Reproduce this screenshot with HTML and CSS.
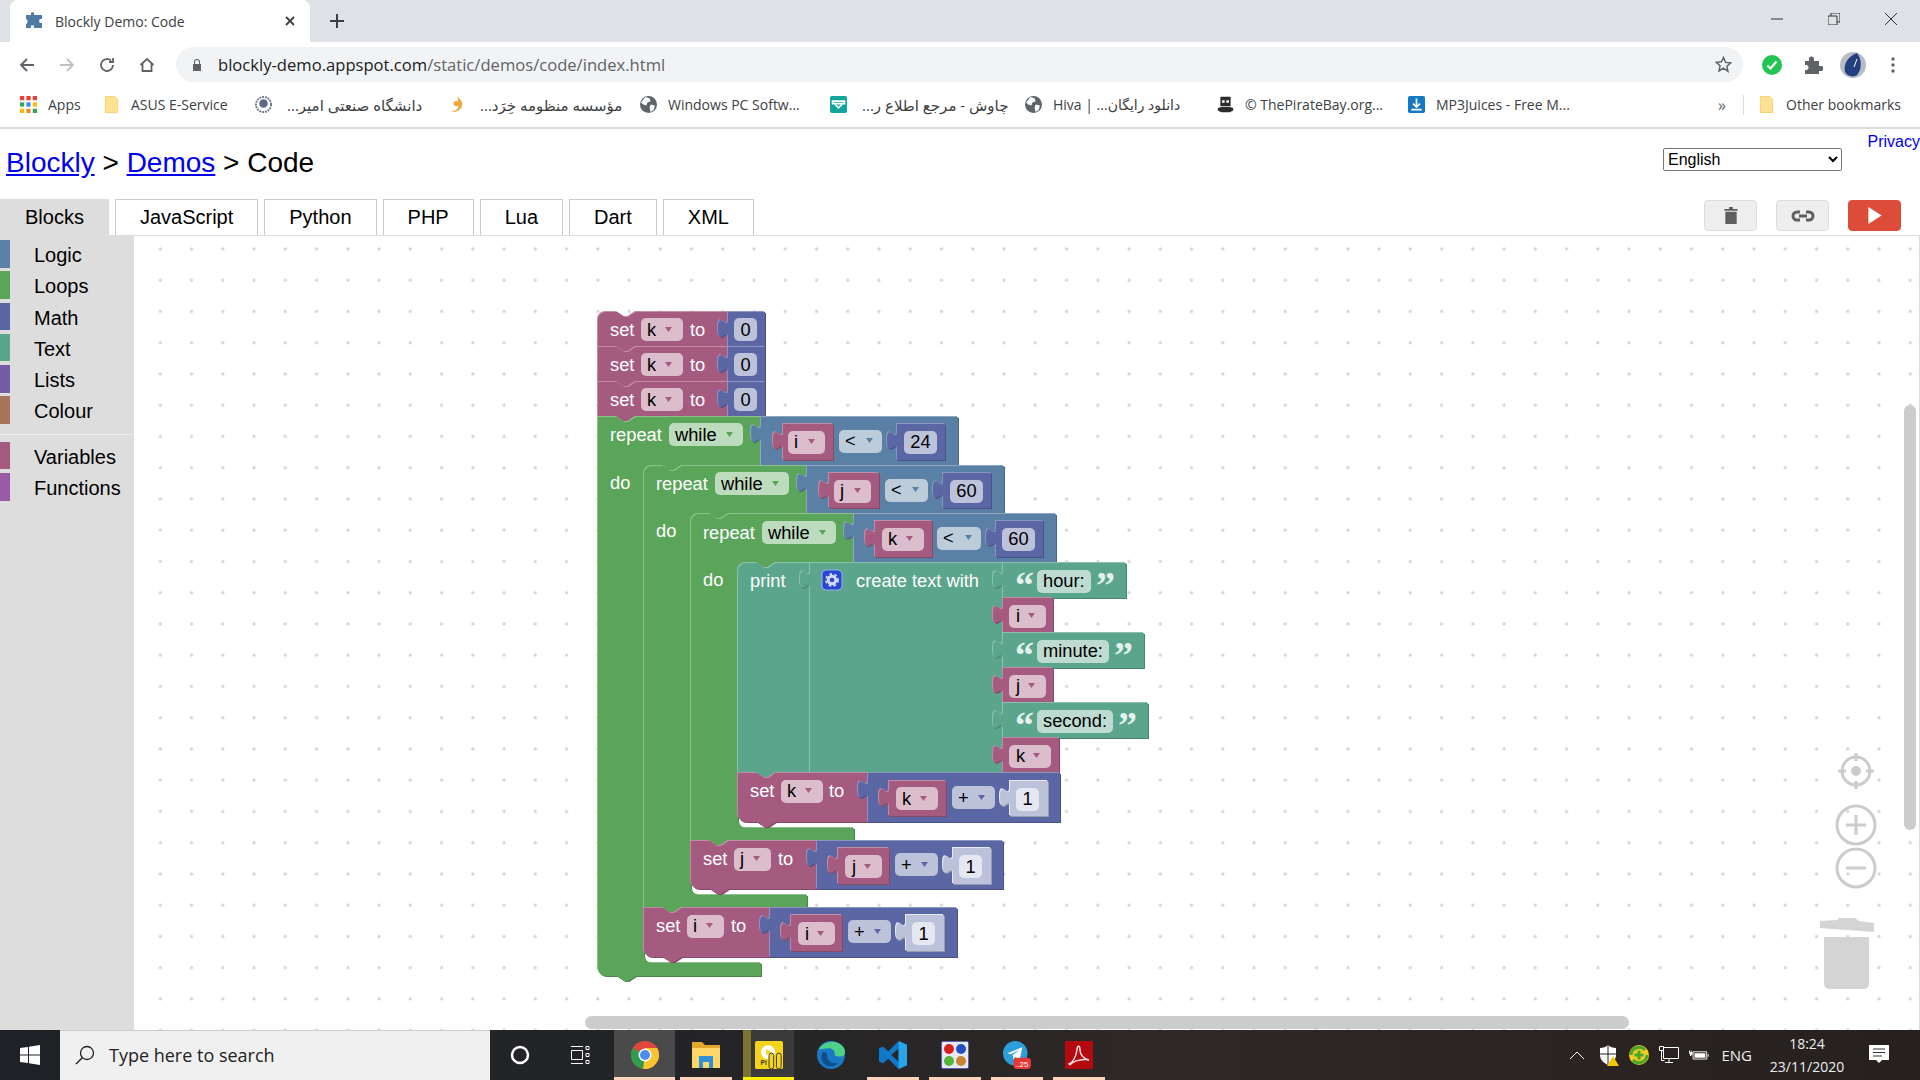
FILE: index.html
```html
<!DOCTYPE html>
<html lang="en">
<head>
  <meta charset="UTF-8">
  <title>Blockly Demo: Code</title>
  <link rel="stylesheet" href="styles.css">
</head>
<body>
  <!-- Browser chrome -->
  <div class="tabstrip">
    <div class="tab">
      <svg class="favicon" viewBox="0 0 20 18"><path fill="#4f7aa3" d="M0 3h5V1c0-1 3-1 3 0v2h8v4h-2c-1 0-1 4 0 4h2v5H8v-2c0-1-3-1-3 0v2H0v-4c2 0 2-5 0-5z"/></svg>
      <span class="tab-title">Blockly Demo: Code</span>
      <svg class="tab-x" viewBox="0 0 10 10"><path d="M1 1l8 8M9 1l-8 8"/></svg>
    </div>
    <svg class="tab-new" viewBox="0 0 14 14"><path d="M7 0v14M0 7h14"/></svg>
    <div class="win-btns">
      <svg viewBox="0 0 12 12"><path d="M0 6h12"/></svg>
      <svg viewBox="0 0 12 12"><path d="M0 3h9v9H0zM3 3V0h9v9H9"/></svg>
      <svg viewBox="0 0 12 12"><path d="M0 0l12 12M12 0L0 12"/></svg>
    </div>
  </div>

  <div class="toolbar">
    <svg class="tool" viewBox="0 0 16 16"><path d="M15 8H2M8 2L2 8l6 6"/></svg>
    <svg class="tool off" viewBox="0 0 16 16"><path d="M1 8h13M8 2l6 6-6 6"/></svg>
    <svg class="tool" viewBox="0 0 16 16"><path d="M14 8a6 6 0 1 1-2-4.500M14 1v4h-4"/></svg>
    <svg class="tool" viewBox="0 0 16 16"><path d="M1.500 8L8 2l6.500 6M3.500 7v7h9V7"/></svg>
    <div class="omnibox">
      <svg class="lock" viewBox="0 0 10 12"><path fill="#5f6368" d="M1 5h1V3a3 3 0 0 1 6 0v2h1v7H1zm2 0h4V3a2 2 0 0 0-4 0z"/></svg>
      <span class="url">blockly-demo.appspot.com<span class="url-path">/static/demos/code/index.html</span></span>
      <svg class="star" viewBox="0 0 16 16"><path d="M8 1.500l2 4.500 4.800.5-3.600 3.200 1 4.800L8 11.500 3.800 14l1-4.800L1.200 6 6 5.500z"/></svg>
    </div>
    <div class="ext-icons">
      <svg viewBox="0 0 20 20"><circle cx="10" cy="10" r="10" fill="#23c552"/><path d="M5.500 10.500l3 3 6-7" fill="none" stroke="#fff" stroke-width="2.200"/></svg>
      <svg viewBox="0 0 20 20"><path fill="#5f6368" d="M2 6h4V4a2.500 2.500 0 0 1 5 0v2h5v5h2a2.500 2.500 0 0 1 0 5h-2v3H2v-4h1a2.500 2.500 0 0 0 0-5H2z"/></svg>
      <svg viewBox="0 0 26 26"><circle cx="13" cy="13" r="13" fill="#b9bcc4"/><path fill="#23407e" d="M17 1C9 4 3 11 5 20c2 4 8 6 12 3 5-5 5-16 0-22z"/><path stroke="#fff" d="M17 7l-3 8"/></svg>
      <svg viewBox="0 0 4 16"><circle cx="2" cy="2" r="1.700" fill="#5f6368"/><circle cx="2" cy="8" r="1.700" fill="#5f6368"/><circle cx="2" cy="14" r="1.700" fill="#5f6368"/></svg>
    </div>
  </div>

  <div class="bookmarks">
    <div class="bm">
      <svg class="bm-ico" viewBox="0 0 16 16"><path fill="#ea4335" d="M0 0h4v4H0zM6 0h4v4H6zM12 0h4v4h-4z"/><path fill="#34a853" d="M0 6h4v4H0z"/><path fill="#4285f4" d="M6 6h4v4H6z"/><path fill="#fbbc05" d="M12 6h4v4h-4z"/><path fill="#fbbc05" d="M0 12h4v4H0z"/><path fill="#ea8a35" d="M6 12h4v4H6z"/><path fill="#34a853" d="M12 12h4v4h-4z"/></svg>
      <span>Apps</span>
    </div>
    <div class="bm">
      <svg class="bm-ico" viewBox="0 0 16 18"><path fill="#fde293" stroke="#f3d36e" d="M1.500.500h10l3 3v14h-13z"/></svg>
      <span>ASUS E-Service</span>
    </div>
    <div class="bm">
      <svg class="bm-ico" viewBox="0 0 18 18"><circle cx="9" cy="9" r="8" fill="#fff" stroke="#66718a" stroke-width="2" stroke-dasharray="2 1"/><circle cx="9" cy="8" r="4.500" fill="#5c6a8a"/></svg>
      <span class="fa" dir="rtl">دانشگاه صنعتی امیر...</span>
    </div>
    <div class="bm">
      <svg class="bm-ico" viewBox="0 0 16 18"><path fill="#f0a63c" d="M9 0c1 3 6 4 5 10-1 5-7 8-12 6 5 0 8-2 8-6-3 2-6 0-5-3 1-2 4-2 5-1 0-2-1-4-1-6z"/></svg>
      <span class="fa" dir="rtl">مؤسسه منظومه خِرَد...</span>
    </div>
    <div class="bm">
      <svg class="bm-ico" viewBox="0 0 16 16"><circle cx="8" cy="8" r="8" fill="#5f6368"/><path fill="#fff" d="M5 1l4 1 1 3-3 1-1 3-3-1-2-2zM10 8l4 1-1 4-3 2-1-4z"/></svg>
      <span>Windows PC Softw...</span>
    </div>
    <div class="bm">
      <svg class="bm-ico" viewBox="0 0 20 20"><rect width="20" height="20" rx="2" fill="#12a59b"/><path fill="none" stroke="#fff" stroke-width="2" d="M3 6h14v3H3zM6 10l4 4 4-4"/></svg>
      <span class="fa" dir="rtl">چاوش - مرجع اطلاع ر...</span>
    </div>
    <div class="bm">
      <svg class="bm-ico" viewBox="0 0 16 16"><circle cx="8" cy="8" r="8" fill="#5f6368"/><path fill="#fff" d="M5 1l4 1 1 3-3 1-1 3-3-1-2-2zM10 8l4 1-1 4-3 2-1-4z"/></svg>
      <span dir="rtl">دانلود رایگان... | Hiva</span>
    </div>
    <div class="bm">
      <svg class="bm-ico" viewBox="0 0 20 20"><path fill="#2b2b2b" d="M4 1h12v11H4zM1 14l4-1h10l4 1v3l-4 2H5l-4-2z"/><path fill="#fff" d="M6 5h3v3H6zM11 5h3v3h-3z"/></svg>
      <span>© ThePirateBay.org...</span>
    </div>
    <div class="bm">
      <svg class="bm-ico" viewBox="0 0 20 20"><rect width="20" height="20" rx="2" fill="#1578c2"/><path fill="none" stroke="#fff" stroke-width="2" d="M10 3v9M6 9l4 4 4-4M4 16h12"/></svg>
      <span>MP3Juices - Free M...</span>
    </div>
    <span class="bm-more">»</span>
    <span class="bm-sep"></span>
    <div class="bm">
      <svg class="bm-ico" viewBox="0 0 16 18"><path fill="#fde293" stroke="#f3d36e" d="M1.500.500h10l3 3v14h-13z"/></svg>
      <span>Other bookmarks</span>
    </div>
  </div>

  <!-- Page -->
  <main class="page">
    <header class="page-head">
      <h1><a href="#">Blockly</a> &gt; <a href="#">Demos</a> &gt; Code</h1>
      <div class="page-opts">
        <a class="privacy" href="#">Privacy</a>
        <select class="lang"><option>English</option></select>
      </div>
    </header>

    <div class="tabrow">
      <div class="code-tab active">Blocks</div>
      <div class="code-tab">JavaScript</div>
      <div class="code-tab">Python</div>
      <div class="code-tab">PHP</div>
      <div class="code-tab">Lua</div>
      <div class="code-tab">Dart</div>
      <div class="code-tab">XML</div>
      <div class="actions">
        <button class="act">
          <svg viewBox="0 0 14 18"><path fill="#5f5f5f" d="M5 0h4v2h5v2H0V2h5zM1 5h12v13H1z"/></svg>
        </button>
        <button class="act">
          <svg viewBox="0 0 24 12"><path fill="none" stroke="#5f5f5f" stroke-width="3" d="M9 2H6a4 4 0 0 0 0 8h3M15 2h3a4 4 0 0 1 0 8h-3M8 6h8"/></svg>
        </button>
        <button class="act run">
          <svg viewBox="0 0 14 18"><path fill="#fff" d="M0 0l14 9-14 9z"/></svg>
        </button>
      </div>
    </div>

    <div class="editor">
      <aside class="toolbox">
        <div class="cat c-logic">Logic</div>
        <div class="cat c-loops">Loops</div>
        <div class="cat c-math">Math</div>
        <div class="cat c-text">Text</div>
        <div class="cat c-lists">Lists</div>
        <div class="cat c-colour">Colour</div>
        <div class="cat-sep"></div>
        <div class="cat c-vars">Variables</div>
        <div class="cat c-funcs">Functions</div>
      </aside>

      <div class="workspace">
        <svg class="canvas" viewBox="134 236 1786 794">
          <defs>
            <pattern id="grid" patternUnits="userSpaceOnUse" x="144.700" y="233.400" width="31.250" height="31.250">
              <circle cx="15.600" cy="15.600" r="1.600" fill="#d2d2d2"/>
            </pattern>
          </defs>
          <rect x="134" y="236" width="1786" height="794" fill="url(#grid)"/>

          <!-- three set k blocks -->
          <g transform="translate(598 312)">
            <path class="pk" d="M0 8a8 8 0 0 1 8-8H19l7.500 5 3.750 0 7.500-5H130V35H37.750l-7.500 5-3.750 0-7.500-5H0Z"/>
            <text class="w" x="12" y="24">set</text>
            <rect class="fpk" x="43" y="6" width="42" height="23" rx="5"/><text class="d" x="49" y="24">k</text><path class="apk" d="M67 15h7l-3.500 5z"/>
            <text class="w" x="92" y="24">to</text>
            <path class="ma" d="M130 0h37V35H130V26c0-12.500-10 10-10-9.400s10 3.100 10-9.400Z"/>
            <rect class="fma" x="136" y="6" width="23" height="23" rx="5"/><text class="d" x="147.500" y="24" text-anchor="middle">0</text>
          </g>
          <g transform="translate(598 347)">
            <path class="pk" d="M0 0H19l7.500 5 3.750 0 7.500-5H130V35H37.750l-7.500 5-3.750 0-7.500-5H0Z"/>
            <text class="w" x="12" y="24">set</text>
            <rect class="fpk" x="43" y="6" width="42" height="23" rx="5"/><text class="d" x="49" y="24">k</text><path class="apk" d="M67 15h7l-3.500 5z"/>
            <text class="w" x="92" y="24">to</text>
            <path class="ma" d="M130 0h37V35H130V26c0-12.500-10 10-10-9.400s10 3.100 10-9.400Z"/>
            <rect class="fma" x="136" y="6" width="23" height="23" rx="5"/><text class="d" x="147.500" y="24" text-anchor="middle">0</text>
          </g>
          <g transform="translate(598 382)">
            <path class="pk" d="M0 0H19l7.500 5 3.750 0 7.500-5H130V35H37.750l-7.500 5-3.750 0-7.500-5H0Z"/>
            <text class="w" x="12" y="24">set</text>
            <rect class="fpk" x="43" y="6" width="42" height="23" rx="5"/><text class="d" x="49" y="24">k</text><path class="apk" d="M67 15h7l-3.500 5z"/>
            <text class="w" x="92" y="24">to</text>
            <path class="ma" d="M130 0h37V35H130V26c0-12.500-10 10-10-9.400s10 3.100 10-9.400Z"/>
            <rect class="fma" x="136" y="6" width="23" height="23" rx="5"/><text class="d" x="147.500" y="24" text-anchor="middle">0</text>
          </g>

          <!-- outer repeat -->
          <g transform="translate(598 417)">
            <path class="gr" d="M0 0H19l7.500 5 3.750 0 7.500-5H163V49H84l-7.500 5-3.750 0-7.500-5H54a8 8 0 0 0-8 8V538a8 8 0 0 0 8 8H163V559H37.750l-7.500 5-3.750 0-7.500-5H8a8 8 0 0 1-8-8Z"/>
            <text class="w" x="12" y="24">repeat</text>
            <rect class="fgr" x="71" y="6" width="74" height="23" rx="5"/><text class="d" x="77" y="24">while</text><path class="agr" d="M128 15h7l-3.500 5z"/>
            <text class="w" x="12" y="72">do</text>
          </g>
          <g transform="translate(761 417)">
            <path class="bl" d="M0 0H197V49H0V26c0-12.500-10 10-10-9.400s10 3.100 10-9.400Z"/>
            <path class="pk" transform="translate(22 7)" d="M0 0H50V36H0V26c0-12.500-10 10-10-9.400s10 3.100 10-9.400Z"/>
            <rect class="fpk" x="27" y="14" width="37" height="23" rx="5"/><text class="d" x="33" y="31">i</text><path class="apk" d="M47 22h7l-3.500 5z"/>
            <rect class="fbl" x="78" y="13" width="43" height="23" rx="5"/><text class="d" x="84" y="30">&lt;</text><path class="abl" d="M105 21h7l-3.500 5z"/>
            <path class="ma" transform="translate(136 7)" d="M0 0H48V36H0V26c0-12.500-10 10-10-9.400s10 3.100 10-9.400Z"/>
            <rect class="fma" x="143" y="14" width="33" height="23" rx="5"/><text class="d" x="159.500" y="31" text-anchor="middle">24</text>
          </g>

          <!-- middle repeat -->
          <g transform="translate(644 466)">
            <path class="gr" d="M8 0H19l7.500 5 3.750 0 7.500-5H163V48H85l-7.500 5-3.750 0-7.500-5H55a8 8 0 0 0-8 8V421a8 8 0 0 0 8 8H163V442H37.750l-7.500 5-3.750 0-7.500-5H0V8a8 8 0 0 1 8-8Z"/>
            <text class="w" x="12" y="24">repeat</text>
            <rect class="fgr" x="71" y="6" width="74" height="23" rx="5"/><text class="d" x="77" y="24">while</text><path class="agr" d="M128 15h7l-3.500 5z"/>
            <text class="w" x="12" y="71">do</text>
          </g>
          <g transform="translate(807 466)">
            <path class="bl" d="M0 0H197V48H0V26c0-12.500-10 10-10-9.400s10 3.100 10-9.400Z"/>
            <path class="pk" transform="translate(22 7)" d="M0 0H50V35H0V26c0-12.500-10 10-10-9.400s10 3.100 10-9.400Z"/>
            <rect class="fpk" x="27" y="14" width="37" height="23" rx="5"/><text class="d" x="33" y="31">j</text><path class="apk" d="M47 22h7l-3.500 5z"/>
            <rect class="fbl" x="78" y="13" width="43" height="23" rx="5"/><text class="d" x="84" y="30">&lt;</text><path class="abl" d="M105 21h7l-3.500 5z"/>
            <path class="ma" transform="translate(136 7)" d="M0 0H48V35H0V26c0-12.500-10 10-10-9.400s10 3.100 10-9.400Z"/>
            <rect class="fma" x="143" y="14" width="33" height="23" rx="5"/><text class="d" x="159.500" y="31" text-anchor="middle">60</text>
          </g>

          <!-- inner repeat -->
          <g transform="translate(691 514)">
            <path class="gr" d="M8 0H19l7.500 5 3.750 0 7.500-5H163V49H85l-7.500 5-3.750 0-7.500-5H55a8 8 0 0 0-8 8V306a8 8 0 0 0 8 8H163V327H37.750l-7.500 5-3.750 0-7.500-5H0V8a8 8 0 0 1 8-8Z"/>
            <text class="w" x="12" y="25">repeat</text>
            <rect class="fgr" x="71" y="7" width="74" height="23" rx="5"/><text class="d" x="77" y="25">while</text><path class="agr" d="M128 16h7l-3.500 5z"/>
            <text class="w" x="12" y="72">do</text>
          </g>
          <g transform="translate(854 514)">
            <path class="bl" d="M0 0H202V49H0V26c0-12.500-10 10-10-9.400s10 3.100 10-9.400Z"/>
            <path class="pk" transform="translate(21 7)" d="M0 0H57V36H0V26c0-12.500-10 10-10-9.400s10 3.100 10-9.400Z"/>
            <rect class="fpk" x="28" y="14" width="42" height="23" rx="5"/><text class="d" x="34" y="31">k</text><path class="apk" d="M52 22h7l-3.500 5z"/>
            <rect class="fbl" x="83" y="13" width="44" height="23" rx="5"/><text class="d" x="89" y="30">&lt;</text><path class="abl" d="M111 21h7l-3.500 5z"/>
            <path class="ma" transform="translate(142 7)" d="M0 0H47V36H0V26c0-12.500-10 10-10-9.400s10 3.100 10-9.400Z"/>
            <rect class="fma" x="148" y="14" width="33" height="23" rx="5"/><text class="d" x="164.500" y="31" text-anchor="middle">60</text>
          </g>

          <!-- print + create text with -->
          <g transform="translate(738 563)">
            <path class="tx" d="M8 0H19l7.500 5 3.750 0 7.500-5H72V210H37.750l-7.500 5-3.750 0-7.500-5H0V8a8 8 0 0 1 8-8Z"/>
            <text class="w" x="12" y="24">print</text>
            <path class="tx" d="M72 0H265V210H72V26c0-12.500-10 10-10-9.400s10 3.100 10-9.400Z"/>
            <rect x="84" y="7" width="20" height="20" rx="4" fill="#2646d4" stroke="#9fb0e6"/>
            <circle cx="94" cy="17" r="5.200" fill="#d3dcfb"/>
            <circle cx="94" cy="17" r="6" fill="none" stroke="#d3dcfb" stroke-width="1.800" stroke-dasharray="2.600 2.400"/>
            <circle cx="94" cy="17" r="2.300" fill="#2646d4"/>
            <text class="w" x="118" y="24">create text with</text>
          </g>
          <g transform="translate(1003 563)">
            <path class="tx" d="M0 0H123V35H0V26c0-12.500-10 10-10-9.400s10 3.100 10-9.400Z"/>
            <text class="q" x="12" y="35">“</text>
            <rect class="ftx" x="34" y="7" width="54" height="23" rx="5"/><text class="d" x="40" y="24">hour:</text>
            <text class="q" x="93" y="35">”</text>
          </g>
          <g transform="translate(1003 598)">
            <path class="pk" d="M0 0H50V35H0V26c0-12.500-10 10-10-9.400s10 3.100 10-9.400Z"/>
            <rect class="fpk" x="6" y="7" width="37" height="23" rx="5"/><text class="d" x="13" y="24">i</text><path class="apk" d="M25 15h7l-3.500 5z"/>
          </g>
          <g transform="translate(1003 633)">
            <path class="tx" d="M0 0H141V35H0V26c0-12.500-10 10-10-9.400s10 3.100 10-9.400Z"/>
            <text class="q" x="12" y="35">“</text>
            <rect class="ftx" x="34" y="7" width="72" height="23" rx="5"/><text class="d" x="40" y="24">minute:</text>
            <text class="q" x="111" y="35">”</text>
          </g>
          <g transform="translate(1003 668)">
            <path class="pk" d="M0 0H50V35H0V26c0-12.500-10 10-10-9.400s10 3.100 10-9.400Z"/>
            <rect class="fpk" x="6" y="7" width="37" height="23" rx="5"/><text class="d" x="13" y="24">j</text><path class="apk" d="M25 15h7l-3.500 5z"/>
          </g>
          <g transform="translate(1003 703)">
            <path class="tx" d="M0 0H145V35H0V26c0-12.500-10 10-10-9.400s10 3.100 10-9.400Z"/>
            <text class="q" x="12" y="35">“</text>
            <rect class="ftx" x="34" y="7" width="76" height="23" rx="5"/><text class="d" x="40" y="24">second:</text>
            <text class="q" x="115" y="35">”</text>
          </g>
          <g transform="translate(1003 738)">
            <path class="pk" d="M0 0H56V35H0V26c0-12.500-10 10-10-9.400s10 3.100 10-9.400Z"/>
            <rect class="fpk" x="6" y="7" width="42" height="23" rx="5"/><text class="d" x="13" y="24">k</text><path class="apk" d="M30 15h7l-3.500 5z"/>
          </g>

          <!-- set k = k + 1 -->
          <g transform="translate(738 773)">
            <path class="pk" d="M0 0H19l7.500 5 3.750 0 7.500-5H130V49H37.750l-7.500 5-3.750 0-7.500-5H8a8 8 0 0 1-8-8Z"/>
            <text class="w" x="12" y="24">set</text>
            <rect class="fpk" x="43" y="7" width="42" height="23" rx="5"/><text class="d" x="49" y="24">k</text><path class="apk" d="M67 15h7l-3.500 5z"/>
            <text class="w" x="91" y="24">to</text>
            <g transform="translate(130 0)">
              <path class="ma" d="M0 0H192V49H0V26c0-12.500-10 10-10-9.400s10 3.100 10-9.400Z"/>
              <path class="pk" transform="translate(21 8)" d="M0 0H57V35H0V26c0-12.500-10 10-10-9.400s10 3.100 10-9.400Z"/>
              <rect class="fpk" x="28" y="14" width="42" height="23" rx="5"/><text class="d" x="34" y="32">k</text><path class="apk" d="M52 23h7l-3.500 5z"/>
              <rect class="fma" x="84" y="13" width="43" height="23" rx="5"/><text class="d" x="90" y="31">+</text><path class="ama" d="M110 22h7l-3.500 5z"/>
              <path class="sh" transform="translate(142 8)" d="M0 0H38V35H0V26c0-12.500-10 10-10-9.400s10 3.100 10-9.400Z"/>
              <rect class="fsh" x="148" y="15" width="23" height="23" rx="5"/><text class="d" x="159.500" y="32" text-anchor="middle">1</text>
            </g>
          </g>

          <!-- set j = j + 1 -->
          <g transform="translate(691 841)">
            <path class="pk" d="M0 0H19l7.500 5 3.750 0 7.500-5H126V48H37.750l-7.500 5-3.750 0-7.500-5H8a8 8 0 0 1-8-8Z"/>
            <text class="w" x="12" y="24">set</text>
            <rect class="fpk" x="43" y="7" width="37" height="23" rx="5"/><text class="d" x="49" y="24">j</text><path class="apk" d="M62 15h7l-3.500 5z"/>
            <text class="w" x="87" y="24">to</text>
            <g transform="translate(126 0)">
              <path class="ma" d="M0 0H186V48H0V26c0-12.500-10 10-10-9.400s10 3.100 10-9.400Z"/>
              <path class="pk" transform="translate(21 7)" d="M0 0H51V36H0V26c0-12.500-10 10-10-9.400s10 3.100 10-9.400Z"/>
              <rect class="fpk" x="28" y="14" width="37" height="23" rx="5"/><text class="d" x="35" y="32">j</text><path class="apk" d="M47 23h7l-3.500 5z"/>
              <rect class="fma" x="78" y="12" width="43" height="23" rx="5"/><text class="d" x="84" y="30">+</text><path class="ama" d="M104 21h7l-3.500 5z"/>
              <path class="sh" transform="translate(136 7)" d="M0 0H38V36H0V26c0-12.500-10 10-10-9.400s10 3.100 10-9.400Z"/>
              <rect class="fsh" x="142" y="14" width="23" height="23" rx="5"/><text class="d" x="153.500" y="32" text-anchor="middle">1</text>
            </g>
          </g>

          <!-- set i = i + 1 -->
          <g transform="translate(644 908)">
            <path class="pk" d="M0 0H19l7.500 5 3.750 0 7.500-5H126V49H37.750l-7.500 5-3.750 0-7.500-5H8a8 8 0 0 1-8-8Z"/>
            <text class="w" x="12" y="24">set</text>
            <rect class="fpk" x="43" y="7" width="37" height="23" rx="5"/><text class="d" x="49" y="24">i</text><path class="apk" d="M62 15h7l-3.500 5z"/>
            <text class="w" x="87" y="24">to</text>
            <g transform="translate(126 0)">
              <path class="ma" d="M0 0H187V49H0V26c0-12.500-10 10-10-9.400s10 3.100 10-9.400Z"/>
              <path class="pk" transform="translate(21 7)" d="M0 0H51V36H0V26c0-12.500-10 10-10-9.400s10 3.100 10-9.400Z"/>
              <rect class="fpk" x="28" y="14" width="37" height="23" rx="5"/><text class="d" x="35" y="32">i</text><path class="apk" d="M47 23h7l-3.500 5z"/>
              <rect class="fma" x="78" y="12" width="43" height="23" rx="5"/><text class="d" x="84" y="30">+</text><path class="ama" d="M104 21h7l-3.500 5z"/>
              <path class="sh" transform="translate(136 7)" d="M0 0H38V36H0V26c0-12.500-10 10-10-9.400s10 3.100 10-9.400Z"/>
              <rect class="fsh" x="142" y="14" width="23" height="23" rx="5"/><text class="d" x="153.500" y="32" text-anchor="middle">1</text>
            </g>
          </g>

          <!-- workspace controls -->
          <g class="ctl">
            <circle cx="1856" cy="771" r="14" fill="#fff"/>
            <path d="M1856 753v8M1856 781v8M1838 771h8M1866 771h8"/>
            <circle cx="1856" cy="825" r="19" fill="none"/>
            <path d="M1856 815v20M1846 825h20"/>
            <circle cx="1856" cy="868" r="19" fill="none"/>
            <path d="M1846 868h20"/>
          </g>
          <circle cx="1856" cy="771" r="5" fill="#ccc"/>
          <path class="bin" d="M1820 921l17-1 2-2h16l4 3 15 2v9l-54-4z"/>
          <path class="bin" d="M1824 937h45v47a5 5 0 0 1-5 5h-35a5 5 0 0 1-5-5z"/>

          <rect class="bar" x="585" y="1016" width="1044" height="13" rx="6.500"/>
          <rect class="bar" x="1904" y="405" width="12" height="425" rx="6"/>
          <rect x="1919" y="236" width="1" height="794" fill="#ddd"/>
        </svg>
      </div>
    </div>
  </main>

  <!-- Windows taskbar -->
  <footer class="taskbar">
    <div class="start">
      <svg viewBox="0 0 20 20"><path fill="#fff" d="M0 3l8-1v7.500H0zM9 1.800L20 0v9.500H9zM0 10.500h8V18l-8-1zM9 10.500h11V20L9 18.200z"/></svg>
    </div>
    <div class="search">
      <svg viewBox="0 0 20 20"><circle cx="12" cy="8" r="6.500" fill="none" stroke="#222" stroke-width="1.300"/><path d="M7.500 12.500L1 19" stroke="#222" stroke-width="1.500"/></svg>
      <span>Type here to search</span>
    </div>
    <div class="task plain">
      <svg viewBox="0 0 20 20"><circle cx="10" cy="10" r="8" fill="none" stroke="#fff" stroke-width="2.500"/></svg>
    </div>
    <div class="task plain view">
      <svg viewBox="0 0 20 20"><path fill="none" stroke="#fff" d="M1 1.500h12M1 18.500h12M1.500 5.500h11v9h-11zM16 1.500h3v3h-3zM16 8.500h3v3h-3zM16 15.500h3v3h-3z"/></svg>
    </div>
    <div class="task on current">
      <svg viewBox="0 0 28 28"><circle cx="14" cy="14" r="14" fill="#e0483b"/><path fill="#2f9d4e" d="M14 14L1.900 7A14 14 0 0 0 12 27.900z"/><path fill="#f7c531" d="M14 14l0-7h12.100A14 14 0 0 1 12 27.900z"/><circle cx="14" cy="14" r="6.500" fill="#fff"/><circle cx="14" cy="14" r="5" fill="#4c8bf0"/></svg>
    </div>
    <div class="task on">
      <svg viewBox="0 0 28 26"><path fill="#e3a82b" d="M0 0h10l3 3h15v23H0z"/><path fill="#ffd768" d="M0 6h28v20H0z"/><path fill="#2f8fd8" d="M7 14h14v12h-4v-6h-6v6H7z"/></svg>
    </div>
    <div class="task hot">
      <svg viewBox="0 0 30 30"><rect width="30" height="30" rx="2" fill="#f6d41d"/><circle cx="14" cy="12" r="7.500" fill="#fff"/><path fill="#f6d41d" d="M12 8.500l6 3.500-6 3.500z"/><rect x="15" y="13" width="5" height="17" rx="2.500" fill="#f6d41d" stroke="#333"/><rect x="23" y="13" width="5" height="17" rx="2.500" fill="#f6d41d" stroke="#333"/><text class="pl" x="6" y="26">Pl</text></svg>
    </div>
    <div class="task none">
      <svg viewBox="0 0 30 30"><circle cx="15" cy="15" r="15" fill="#1b78c4"/><path fill="#4fd08a" d="M2 9C6 1 18-2 26 4c5 4 5 10 2 12-3 1-7 1-9-1 1-4-3-8-8-7-5 0-7 1-9 1z"/><path fill="#0e4f8c" d="M11 16c0 6 6 9 12 7-5 6-15 6-18-3-1-4 0-6 1-8 3-1 5 1 5 4z"/></svg>
    </div>
    <div class="task on">
      <svg viewBox="0 0 30 30"><path fill="#0f78c8" d="M21 0l9 4v22l-9 4-11-11-6 5-4-2V8l4-2 6 5zM21 8l-8 7 8 7z"/><path fill="#29a3ea" d="M21 0l9 4v22l-9 4z"/></svg>
    </div>
    <div class="task on">
      <svg viewBox="0 0 28 28"><rect width="28" height="28" rx="2" fill="#e9e9f4" stroke="#34349a" stroke-width="1.500"/><circle cx="8" cy="8" r="5" fill="#d81f1f"/><circle cx="20" cy="8" r="5" fill="#2050c0"/><circle cx="8" cy="20" r="5" fill="#55b33a"/><circle cx="20" cy="20" r="5" fill="#c98432"/></svg>
    </div>
    <div class="task on">
      <svg viewBox="0 0 32 32"><circle cx="14" cy="14" r="14" fill="#2c9fda"/><path fill="#fff" d="M5 14l17-7-3 15-5-4-2 3-1-5 8-6-10 5z"/><rect x="12" y="19" width="20" height="13" rx="4" fill="#e53935"/><text class="badge" x="14" y="30">..25</text></svg>
    </div>
    <div class="task on">
      <svg viewBox="0 0 28 28"><rect width="28" height="28" rx="1" fill="#b3090f"/><path fill="none" stroke="#f6dcdc" stroke-width="1.500" d="M4 23c4-2 7-8 8-14 0-5 3-5 3 0 0 5 4 9 9 10-5-1-13 0-17 3-1 1-2 2-3 1z"/></svg>
    </div>
    <div class="tray">
      <svg class="t-chev" viewBox="0 0 16 10"><path d="M1 9l7-7 7 7" fill="none" stroke="#fff"/></svg>
      <svg class="t-shield" viewBox="0 0 20 21"><path fill="#fff" d="M9 0c2 2 5 3 8 3v7c0 5-4 8-8 10-4-2-8-5-8-10V3c3 0 6-1 8-3z"/><path stroke="#222" d="M9 0v20M1 9h16"/><path fill="#f7c200" d="M14 11l6 10H8z"/></svg>
      <svg class="t-ico" viewBox="0 0 20 20"><circle cx="10" cy="10" r="10" fill="#f2cd20"/><path fill="none" stroke="#49a62b" stroke-width="3" d="M2 10a8 8 0 0 1 14-5M18 10a8 8 0 0 1-14 5"/><path stroke="#49a62b" stroke-width="3" d="M10 5.500v9M5.500 10h9"/></svg>
      <svg class="t-ico" viewBox="0 0 20 18"><path fill="none" stroke="#fff" d="M4.500 1.500h15v11h-15zM10 12.500v4M6 16.500h8M.5.500h4v4h-4zM2.500 4.500v10h3"/></svg>
      <svg class="t-ico" viewBox="0 0 22 12"><path fill="none" stroke="#fff" d="M4.500 2.500h15v8h-15zM21 5v3"/><path fill="#fff" d="M6 4h12v5H6zM0 1h1v2h1V1h1v2h1v2L2 7H1V5L0 4z"/></svg>
      <span class="t-lang">ENG</span>
      <div class="t-clock"><span>18:24</span><span>23/11/2020</span></div>
      <svg class="t-note" viewBox="0 0 20 20"><path fill="#fff" d="M0 0h20v15h-7l-3 3-3-3H0z"/><path stroke="#333" d="M4 4h12M4 7.500h12M4 11h9"/></svg>
    </div>
  </footer>
</body>
</html>
```

FILE: styles.css
```css
* { box-sizing: border-box; }
html, body { height: 100%; }
body {
  margin: 0;
  width: 1920px;
  height: 1080px;
  overflow: hidden;
  display: flex;
  flex-direction: column;
  font-family: "Liberation Sans", Arial, sans-serif;
  background: #fff;
  color: #000;
}

/* Tab strip */
.tabstrip {
  height: 42px;
  flex: none;
  display: flex;
  align-items: flex-end;
  background: #dee1e6;
  padding-left: 10px;
}
.tab {
  width: 300px;
  height: 42px;
  display: flex;
  align-items: center;
  padding: 0 0 0 16px;
  background: #fff;
  border-radius: 8px 8px 0 0;
}
.favicon { width: 20px; height: 18px; flex: none; }
.tab-title {
  margin-left: 9px;
  font: 14px "Open Sans", sans-serif;
  color: #3c4043;
  flex: 1;
}
.tab-x {
  width: 10px;
  height: 10px;
  margin-right: 15px;
  fill: none;
  stroke: #3c4043;
  stroke-width: 1.8;
}
.tab-new {
  width: 14px;
  height: 14px;
  margin: 0 0 14px 20px;
  fill: none;
  stroke: #3c4043;
  stroke-width: 2;
}
.win-btns {
  margin-left: auto;
  align-self: flex-start;
  display: flex;
  gap: 45px;
  padding: 13px 23px 0 0;
}
.win-btns svg {
  width: 12px;
  height: 12px;
  fill: none;
  stroke: #333;
  stroke-width: 1;
}

/* Address bar */
.toolbar {
  height: 46px;
  flex: none;
  display: flex;
  align-items: center;
  padding: 0 0 1px 19px;
  background: #fff;
}
.tool {
  width: 16px;
  height: 16px;
  margin-right: 24px;
  flex: none;
  fill: none;
  stroke: #5f6368;
  stroke-width: 1.8;
}
.tool:nth-child(4) { margin-right: 21px; }
.omnibox {
  width: 1567px;
  height: 35px;
  flex: none;
  display: flex;
  align-items: center;
  padding: 0 11px 0 16px;
  border-radius: 18px;
  background: #f1f3f4;
}
.tool.off { stroke: #bdc1c6; }
.lock { width: 10px; height: 12px; flex: none; }
.url {
  margin-left: 16px;
  font: 16.600px "Open Sans", sans-serif;
  color: #202124;
  flex: 1;
}
.url-path { color: #5f6368; }
.star {
  width: 17px;
  height: 17px;
  fill: none;
  stroke: #5f6368;
  stroke-width: 1.4;
}
.ext-icons {
  display: flex;
  align-items: center;
  margin-left: 19px;
}
.ext-icons svg:nth-child(1) { width: 20px; height: 20px; }
.ext-icons svg:nth-child(2) { width: 20px; height: 20px; margin-left: 21px; }
.ext-icons svg:nth-child(3) { width: 26px; height: 26px; margin-left: 17px; }
.ext-icons svg:nth-child(4) { width: 4px; height: 16px; margin-left: 25px; }

/* Bookmarks */
.bookmarks {
  height: 41px;
  flex: none;
  display: grid;
  grid-template-columns: 83px 152px 193px 192px 190px 195px 192px 191px 310px 25px 15px 1fr;
  align-items: center;
  padding: 0 0 6px 20px;
  background: #fff;
  border-bottom: 2px solid #dadce0;
  font: 14px "Open Sans", "DejaVu Sans", sans-serif;
  color: #3c4043;
  white-space: nowrap;
}
.bm { display: flex; align-items: center; gap: 11px; }
.bm-ico { width: 17px; height: 17px; flex: none; }
.bm .fa { font-size: 15px; margin-left: 4px; }
.bm-more { color: #5f6368; font-size: 16px; }
.bm-sep { width: 1px; height: 20px; background: #dadce0; }

/* Page */
.page {
  flex: 1;
  min-height: 0;
  display: flex;
  flex-direction: column;
}
.page-head {
  height: 70px;
  flex: none;
  display: flex;
  justify-content: space-between;
  align-items: flex-start;
}
.page-head h1 {
  margin: 18px 0 0 6px;
  font-size: 28px;
  font-weight: normal;
  line-height: 32px;
}
.page-opts {
  display: flex;
  flex-direction: column;
  align-items: flex-end;
}
.privacy {
  font-size: 16px;
  line-height: 22px;
  margin-top: 2px;
  color: #00e;
  text-decoration: none;
}
.lang {
  width: 179px;
  height: 23px;
  margin: -5px 78px 0 0;
  font: 16px "Liberation Sans", sans-serif;
  background: #fff;
  color: #000;
  border: 1px solid #767676;
  border-radius: 2px;
}

.tabrow {
  height: 37px;
  flex: none;
  display: flex;
  border-bottom: 1px solid #ddd;
}
.code-tab {
  height: 36px;
  padding: 0 24px;
  margin-right: 6px;
  font-size: 20px;
  line-height: 35px;
  border: 1px solid #ccc;
  border-bottom: none;
  color: #000;
}
.code-tab.active { background: #ddd; border-color: #ddd; }
.actions {
  margin-left: auto;
  display: flex;
  gap: 19px;
  padding: 1px 19px 0 0;
}
.act {
  width: 53px;
  height: 31px;
  padding: 0;
  display: flex;
  align-items: center;
  justify-content: center;
  background: #eee;
  border: 1px solid #ddd;
  border-radius: 4px;
}
.act svg { width: 18px; height: 17px; }
.act:nth-child(2) svg { width: 24px; height: 12px; }
.act.run { background: #dd4b39; border-color: #dd4b39; }

.editor {
  flex: 1;
  min-height: 0;
  display: flex;
}

/* Toolbox */
.toolbox {
  width: 134px;
  flex: none;
  padding-top: 4px;
  background: #ddd;
}
.cat {
  height: 27.500px;
  margin-bottom: 3.800px;
  padding-left: 24px;
  border-left: 10px solid #999;
  font-size: 20px;
  line-height: 30px;
  color: #000;
}
.cat-sep {
  height: 1px;
  margin: 10px 0 7px;
  background: #eee;
}
.c-logic { border-color: #5b80a5; }
.c-loops { border-color: #5ba55b; }
.c-math { border-color: #5b67a5; }
.c-text { border-color: #5ba58c; }
.c-lists { border-color: #745ba5; }
.c-colour { border-color: #a5745b; }
.c-vars { border-color: #a55b80; }
.c-funcs { border-color: #995ba5; }

/* Blockly workspace */
.workspace { flex: 1; min-width: 0; background: #fff; }
.canvas { display: block; width: 100%; height: 100%; }
.canvas text { font-family: "Liberation Sans", sans-serif; font-size: 18.300px; }
.canvas .w { fill: #fff; }
.canvas .d { fill: #000; }
.canvas .q {
  font-family: "Liberation Serif", serif;
  font-size: 38px;
  font-weight: bold;
  fill: #e4f1ec;
}

.pk { fill: #a55b80; filter: drop-shadow(-1px -1px 0 #c08ca6) drop-shadow(1px 1px 0 #844966); }
.bl { fill: #5b80a5; filter: drop-shadow(-1px -1px 0 #8ca6c0) drop-shadow(1px 1px 0 #496684); }
.ma { fill: #5b67a5; filter: drop-shadow(-1px -1px 0 #8c95c0) drop-shadow(1px 1px 0 #495284); }
.gr { fill: #5ba55b; filter: drop-shadow(-1px -1px 0 #8cc08c) drop-shadow(1px 1px 0 #498449); }
.tx { fill: #5ba58c; filter: drop-shadow(-1px -1px 0 #8cc0af) drop-shadow(1px 1px 0 #498470); }
.sh { fill: #bdc2db; filter: drop-shadow(-1px -1px 0 #e8eaf3) drop-shadow(1px 1px 0 #979bb0); }
.fpk { fill: #dbbdcc; }
.fbl { fill: #bdccdb; }
.fma { fill: #bdc2db; }
.fgr { fill: #bddbbd; }
.ftx { fill: #bddbd1; }
.fsh { fill: #e5e7f1; }
.apk { fill: #a55b80; }
.abl { fill: #5b80a5; }
.ama { fill: #5b67a5; }
.agr { fill: #5ba55b; }

.ctl { fill: none; stroke: #ccc; stroke-width: 3; }
.bin { fill: #ccc; fill-opacity: .85; }
.bar { fill: #ccc; }

/* Taskbar */
.taskbar {
  height: 50px;
  flex: none;
  display: flex;
  background: linear-gradient(90deg, #1e2226, #232427 35%, #2e2826 60%, #26211f);
  color: #fff;
}
.start {
  width: 60px;
  display: flex;
  align-items: center;
  justify-content: center;
}
.start svg { width: 20px; height: 20px; }
.search {
  width: 430px;
  display: flex;
  align-items: center;
  gap: 14px;
  padding: 0 0 2px 15px;
  background: #f0f0f0;
  border-top: 1px solid #ccc;
  font: 18px "Open Sans", sans-serif;
  color: #222;
}
.search svg { width: 20px; height: 22px; flex: none; }
.task {
  width: 62px;
  flex: none;
  display: flex;
  align-items: center;
  justify-content: center;
  position: relative;
}
.task svg { width: 28px; height: 28px; }
.task.plain { width: 60px; }
.task.plain svg { width: 20px; height: 20px; }
.task.view { margin-right: 4px; }
.task.on::after,
.task.hot::after {
  content: "";
  position: absolute;
  left: 5px;
  right: 5px;
  bottom: 0;
  height: 3px;
  background: #fdd3bb;
}
.task.current { width: 61px; background: #4a4a4a; }
.task.current::after { left: 0; right: 0; }
.task.hot {
  width: 51px;
  margin: 0 6px;
  padding-right: 8px;
  background: #3a3a3a;
  border-left: 8px solid #7a7430;
}
.task.hot::after { left: -8px; right: 0; background: #fff000; }
.pl { font: bold 7px "Liberation Sans", sans-serif; fill: #333; }
.badge { font: 9px "Liberation Sans", sans-serif; fill: #fff; }

.tray {
  margin-left: auto;
  display: flex;
  align-items: center;
  padding-right: 31px;
  font: 14px "Open Sans", sans-serif;
  color: #eee;
}
.t-chev { width: 16px; height: 10px; margin-right: 14px; }
.t-shield { width: 20px; height: 21px; margin-right: 10px; }
.t-ico { width: 20px; height: 20px; margin-right: 10px; }
.t-lang { margin: 0 16px 0 2px; font-size: 15px; }
.t-clock {
  width: 78px;
  display: flex;
  flex-direction: column;
  align-items: center;
  gap: 3px;
  line-height: 20px;
}
.t-note { width: 20px; height: 20px; margin-left: 23px; }
```
